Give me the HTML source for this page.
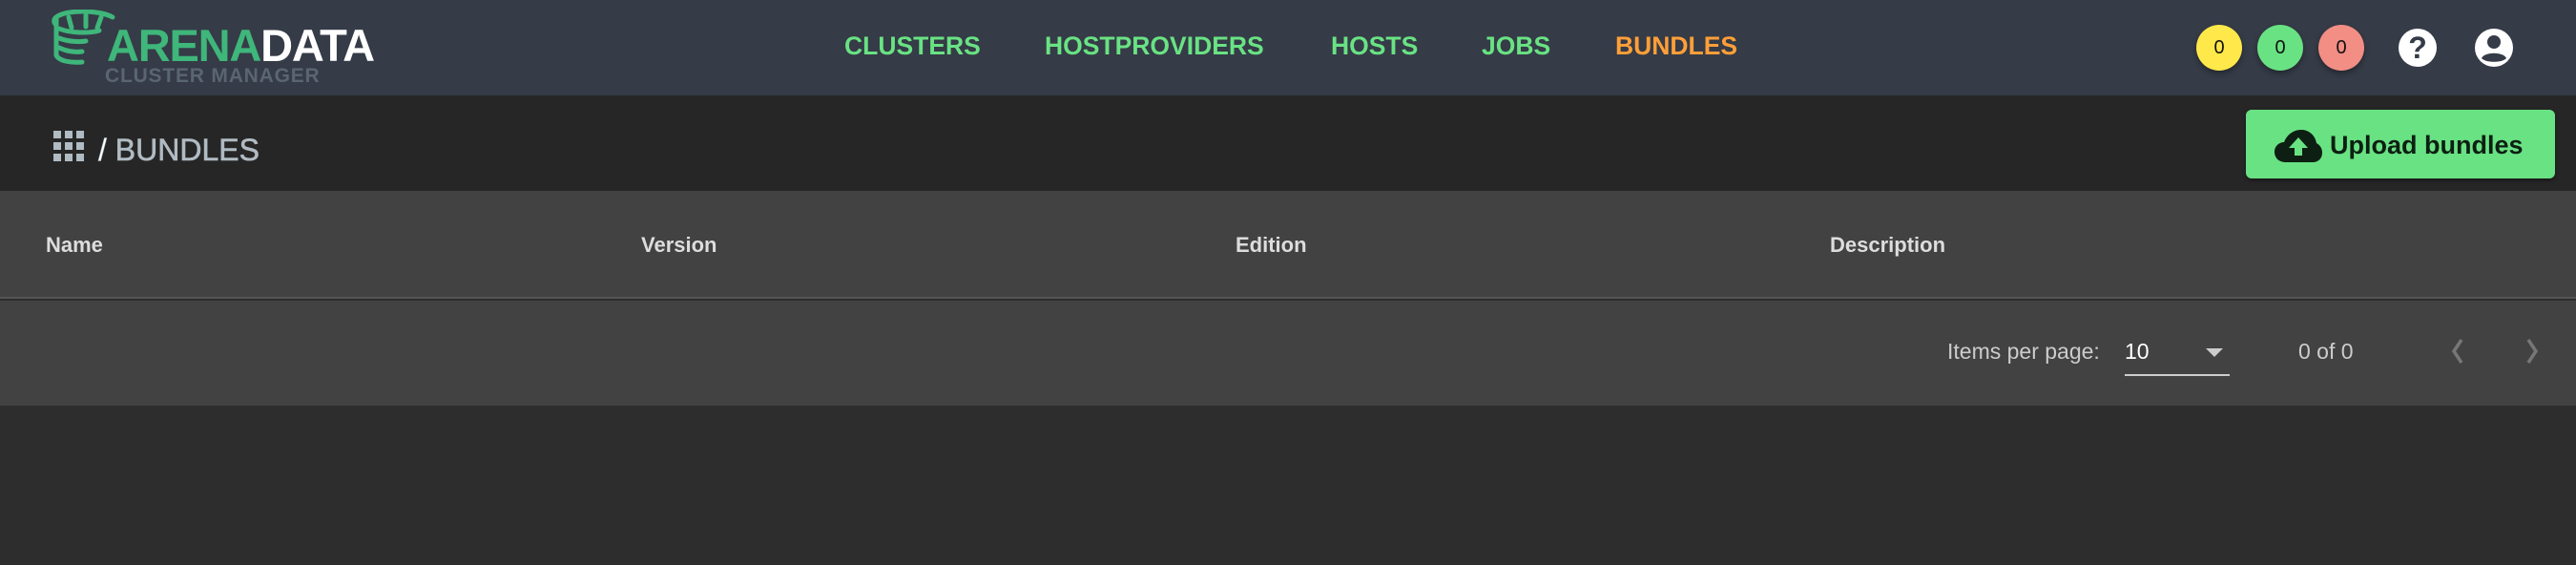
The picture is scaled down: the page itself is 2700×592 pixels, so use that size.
<!DOCTYPE html>
<html><head><meta charset="utf-8"><style>
*{margin:0;padding:0;box-sizing:border-box}
body{width:2700px;height:592px;background:#2d2d2d;font-family:"Liberation Sans",Arial,sans-serif;position:relative;overflow:hidden}
.abs{position:absolute}
#hdr{left:0;top:0;width:2700px;height:100px;background:#353b47}
#sub{left:0;top:100px;width:2700px;height:100px;background:#262626}
#th{left:0;top:200px;width:2700px;height:113px;background:#424242;border-bottom:2px solid #555}
#pg{left:0;top:315px;width:2700px;height:110px;background:#424242}
.nav{top:33px;font-size:26.5px;font-weight:bold;color:#69e283;white-space:nowrap}
.badge{top:26px;width:48px;height:48px;border-radius:50%;font-size:20px;line-height:48px;text-align:center;color:#111;box-shadow:0 3px 6px rgba(0,0,0,.35)}
.thc{top:244px;font-size:22px;font-weight:bold;color:#ddd}
.pt{font-size:23px;color:#ccc;top:355px;white-space:nowrap}
</style></head><body>
<div id="hdr" class="abs"></div>
<div id="sub" class="abs"></div>
<div id="th" class="abs"></div>
<div id="pg" class="abs"></div>

<svg class="abs" style="left:54px;top:10px" width="70" height="58" viewBox="0 0 70 58" fill="none" stroke="#3fb67a" stroke-width="5" stroke-linecap="round">
<path d="M64 8 C50 0 14 0 5 8 C2 10 2 14 5 16"/>
<path d="M5 8 L5 48 C8 54 20 56 32 55"/>
<path d="M18 8 L21 19 M36 6 L36 18 M52 8 L48 19"/>
<path d="M8 20 C20 25 40 25 50 22 M8 30 C18 34 30 34 36 33 M8 40 C16 44 26 45 32 44"/>
</svg>
<div class="abs" style="left:112px;top:20px;font-size:47px;font-weight:bold;letter-spacing:-1.2px;white-space:nowrap"><span style="color:#3fb67a">ARENA</span><span style="color:#fff">DATA</span></div>
<div class="abs" style="left:110px;top:68px;font-size:21px;font-weight:bold;color:#5a6572;white-space:nowrap;letter-spacing:0.8px">CLUSTER MANAGER</div>

<div class="abs nav" style="left:885px">CLUSTERS</div>
<div class="abs nav" style="left:1095px">HOSTPROVIDERS</div>
<div class="abs nav" style="left:1395px">HOSTS</div>
<div class="abs nav" style="left:1553px">JOBS</div>
<div class="abs nav" style="left:1693px;color:#ff9f38">BUNDLES</div>

<div class="abs badge" style="left:2302px;background:#ffe84a">0</div>
<div class="abs badge" style="left:2366px;background:#69e283">0</div>
<div class="abs badge" style="left:2430px;background:#f28e84">0</div>
<div class="abs" style="left:2514px;top:30px;width:40px;height:40px;border-radius:50%;background:#fff;color:#353b47;font-weight:bold;font-size:32px;line-height:40px;text-align:center">?</div>
<svg class="abs" style="left:2594px;top:30px" width="40" height="40" viewBox="0 0 40 40"><circle cx="20" cy="20" r="20" fill="#fff"/><circle cx="20" cy="14" r="7" fill="#353b47"/><path d="M7 31 C10 24 30 24 33 31 C29 36 11 36 7 31Z" fill="#353b47"/></svg>

<svg class="abs" style="left:56px;top:137px" width="32" height="32" viewBox="0 0 32 32" fill="#b0bbc3"><rect x="0" y="0" width="8" height="8"/><rect x="12" y="0" width="8" height="8"/><rect x="24" y="0" width="8" height="8"/><rect x="0" y="12" width="8" height="8"/><rect x="12" y="12" width="8" height="8"/><rect x="24" y="12" width="8" height="8"/><rect x="0" y="24" width="8" height="8"/><rect x="12" y="24" width="8" height="8"/><rect x="24" y="24" width="8" height="8"/></svg>
<div class="abs" style="left:103px;top:139px;font-size:32px;color:#b0bbc3;white-space:nowrap;-webkit-text-stroke:0.6px #b0bbc3"><span style="color:#fff">/</span> BUNDLES</div>

<div class="abs" style="left:2354px;top:115px;width:324px;height:72px;border-radius:6px;background:#69e283;box-shadow:0 2px 4px rgba(0,0,0,.4)"></div>
<svg class="abs" style="left:2384px;top:136px" width="50" height="34" viewBox="0 0 50 34"><path d="M12 34 C4 34 0 29 0 23 C0 17 5 13 10 13 C13 5 20 0 28 0 C37 0 43 7 44 14 C48 16 50 20 50 24 C50 30 46 34 40 34Z" fill="#0d1f12"/><path d="M25 8 L35 19 L29 19 L29 27 L21 27 L21 19 L15 19Z" fill="#69e283"/></svg>
<div class="abs" style="left:2442px;top:137px;font-size:27px;font-weight:bold;color:#0d1f12;white-space:nowrap">Upload bundles</div>

<div class="abs thc" style="left:48px">Name</div>
<div class="abs thc" style="left:672px">Version</div>
<div class="abs thc" style="left:1295px">Edition</div>
<div class="abs thc" style="left:1918px">Description</div>

<div class="abs pt" style="left:2041px">Items per page:</div>
<div class="abs pt" style="left:2227px;color:#fff">10</div>
<div class="abs" style="left:2227px;top:392px;width:110px;height:2px;background:#ccc"></div>
<svg class="abs" style="left:2312px;top:365px" width="18" height="10"><path d="M0 0 L18 0 L9 9Z" fill="#ccc"/></svg>
<div class="abs pt" style="left:2409px">0 of 0</div>
<svg class="abs" style="left:2560px;top:354px" width="110" height="30" fill="none" stroke="#777" stroke-width="3.5"><path d="M20 2 L12 14 L20 26"/><path d="M90 2 L98 14 L90 26"/></svg>
</body></html>
